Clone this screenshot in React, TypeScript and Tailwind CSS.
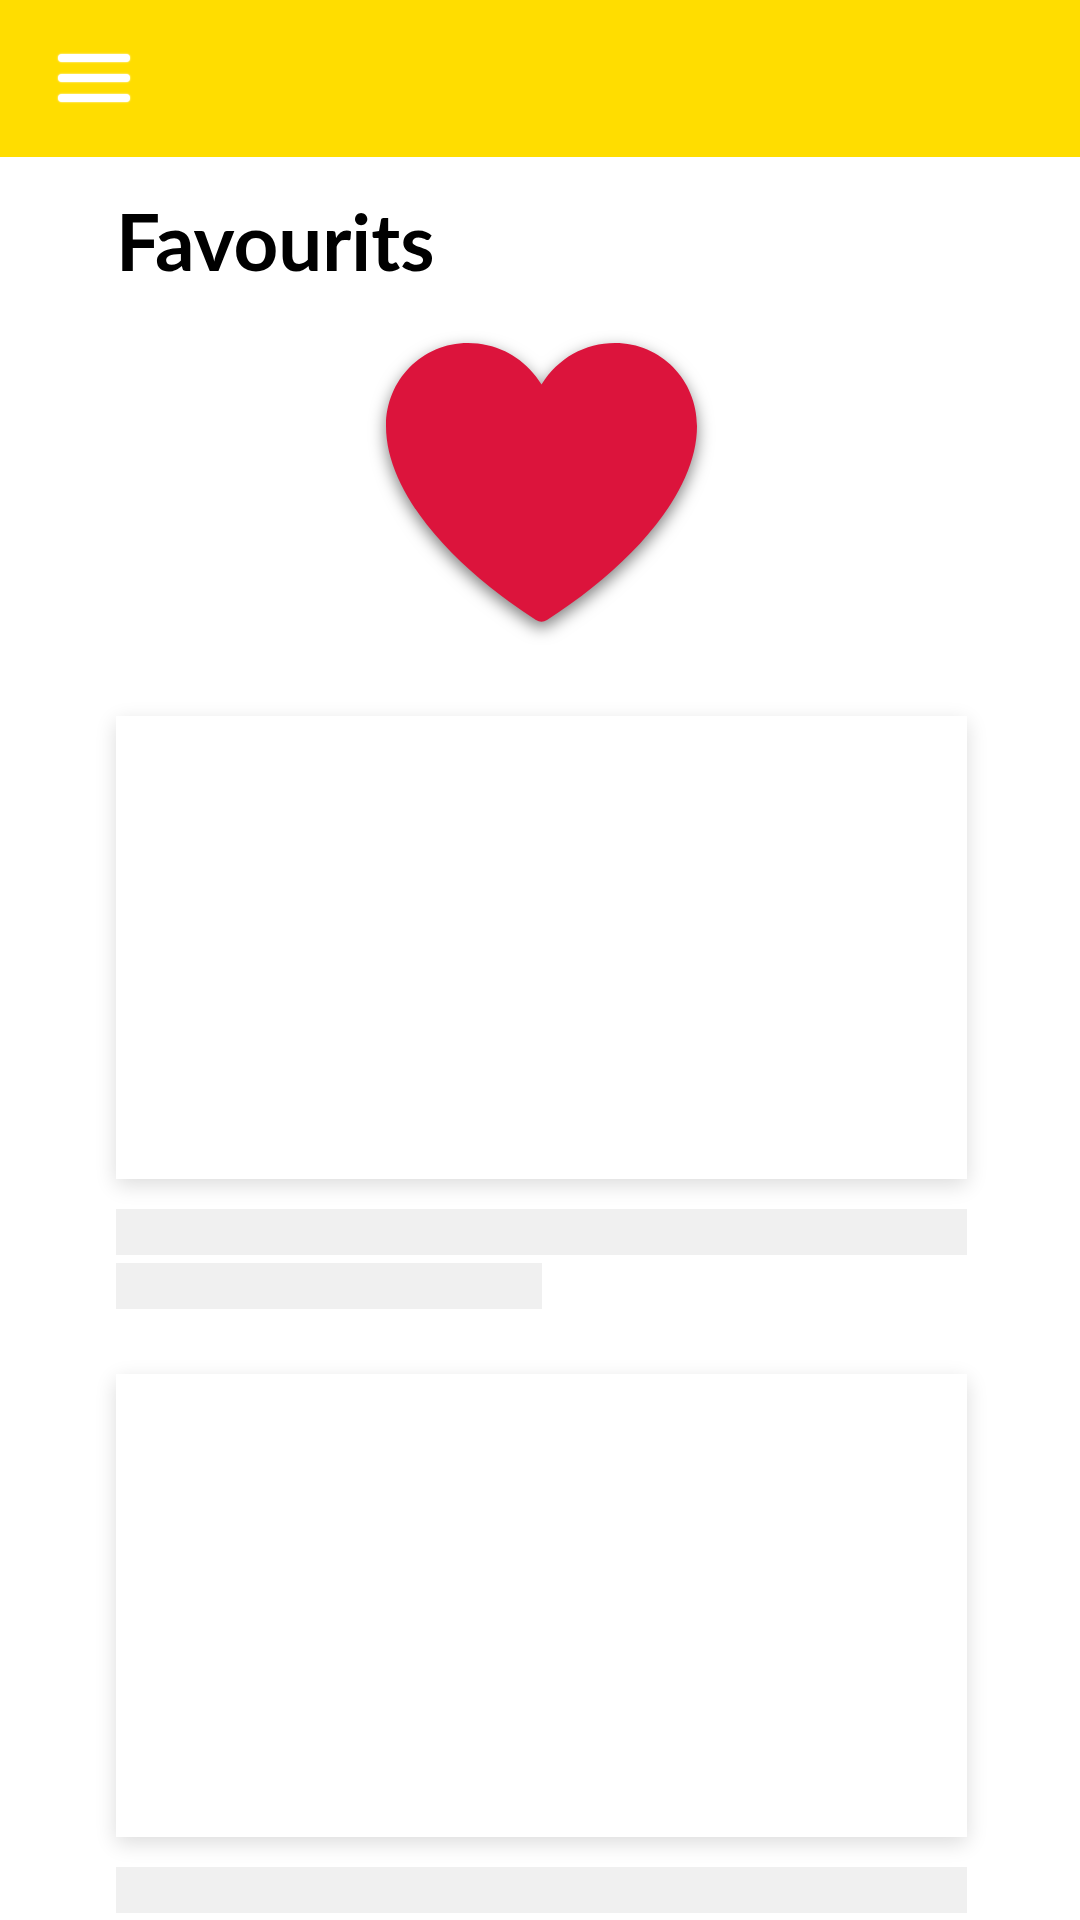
type CardProps = { label: string; lines: number };

function FavouriteCard({ label, lines }: CardProps) {
  return (
    <article aria-label={label} className="flex flex-col">
      <div className="h-[463px] bg-white shadow-[0_6px_20px_rgba(0,0,0,0.14)]" />
      <div className="mt-[30px] flex flex-col gap-2">
        <div className="h-[46px] bg-[#f0f0f0]" />
        {lines > 1 && <div className="h-[46px] w-1/2 bg-[#f0f0f0]" />}
      </div>
    </article>
  );
}

function Heart() {
  return (
    <svg
      viewBox="0 0 311 279"
      className="h-[279px] w-[311px] overflow-visible drop-shadow-[0_6px_8px_rgba(0,0,0,0.5)]"
      aria-hidden="true"
    >
      <path
        fill="#dc143c"
        d="M155.5 41.5C139 15 112 0 82 0C36 0 0 37 0 83C0 150 66 223 150 277Q155.5 280.5 161 277C245 223 311 150 311 83C311 37 275 0 229 0C199 0 172 15 155.5 41.5Z"
      />
    </svg>
  );
}

export default function App() {
  return (
    <div className="min-h-screen bg-white text-black">
      <header className="flex h-[157px] items-center bg-[#ffdd00] px-[58px] pb-0.5">
        <button type="button" aria-label="Open menu" className="flex w-[72px] flex-col gap-3">
          <span className="h-2 rounded-full bg-white shadow-[0_0_2px_#ffffff]" />
          <span className="h-2 rounded-full bg-white shadow-[0_0_2px_#ffffff]" />
          <span className="h-2 rounded-full bg-white shadow-[0_0_2px_#ffffff]" />
        </button>
      </header>
      <main className="pr-[113px] pl-[116px]">
        <h1 className="pt-9 font-['Trebuchet_MS','Lato',sans-serif] text-[78px] leading-[96px] font-bold">
          Favourits
        </h1>
        <div className="mt-[54px] flex justify-center">
          <Heart />
        </div>
        <section aria-label="Favourite items" className="mt-[94px] flex flex-col gap-[65px]">
          <FavouriteCard label="Favourite 1" lines={2} />
          <FavouriteCard label="Favourite 2" lines={1} />
        </section>
      </main>
    </div>
  );
}
